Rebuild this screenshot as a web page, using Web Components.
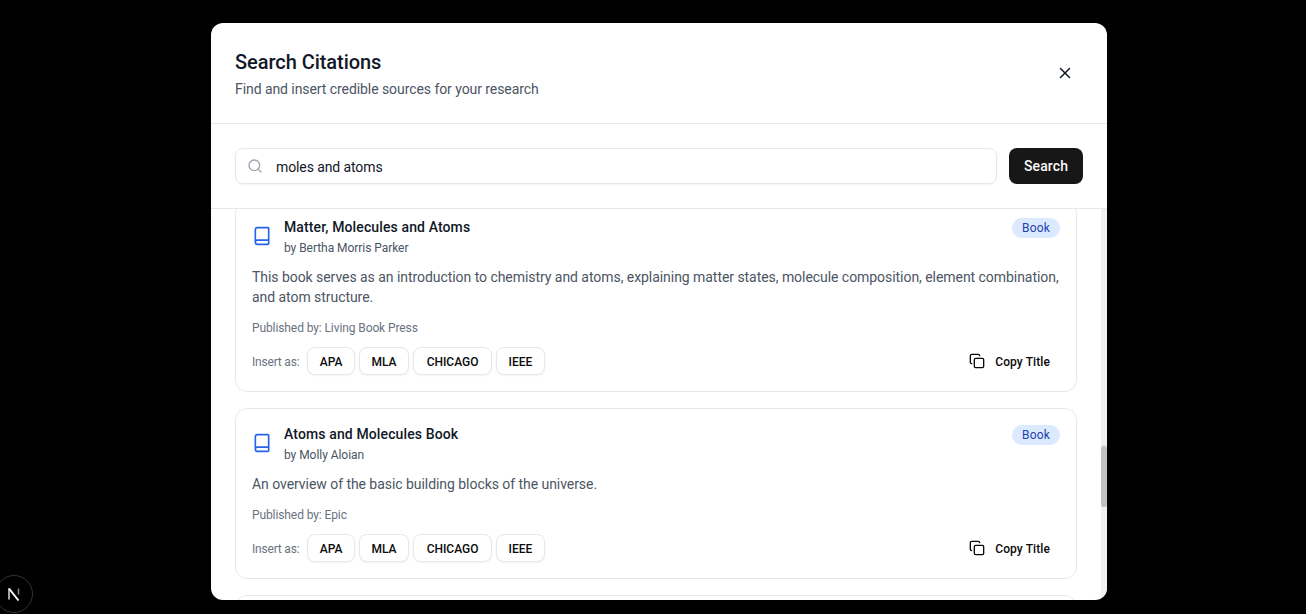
<!DOCTYPE html>
<html lang="en">
<head>
<meta charset="utf-8">
<title>Search Citations</title>
<style>
html, body { height: 100%; }
body {
	margin: 0;
	background: #000;
	overflow: hidden;
	font-family: Roboto, "Noto Sans", sans-serif;
	color: #111827;
}
citation-dialog { margin: 23px 0 0 211px; }
</style>
</head>
<body>

<citation-dialog heading="Search Citations" subheading="Find and insert credible sources for your research" query="moles and atoms">
	<citation-card title-text="Matter, Molecules and Atoms" author="Bertha Morris Parker" publisher="Living Book Press" kind="Book">
		This book serves as an introduction to chemistry and atoms, explaining matter states, molecule composition, element combination, and atom structure.
	</citation-card>
	<citation-card title-text="Atoms and Molecules Book" author="Molly Aloian" publisher="Epic" kind="Book">
		An overview of the basic building blocks of the universe.
	</citation-card>
	<citation-card></citation-card>
</citation-dialog>

<dev-badge></dev-badge>

<script>
const templateDialog = document.createElement('template');
templateDialog.innerHTML = `
<style>
:host {
	display: flex;
	flex-direction: column;
	width: 896px;
	height: 577px;
	background: #fff;
	border-radius: 12px;
	overflow: hidden;
	position: relative;
}
header {
	display: flex;
	justify-content: space-between;
	align-items: center;
	height: 100px;
	padding: 0 24px;
	border-bottom: 1px solid #e5e7eb;
	flex: none;
}
h2 {
	margin: 1px 0 3px;
	font-size: 20px;
	line-height: 28px;
	font-weight: 500;
	letter-spacing: -0.05px;
	color: #111827;
}
p {
	margin: 0;
	font-size: 14px;
	line-height: 20px;
	letter-spacing: -0.07px;
	color: #4b5563;
}
.close {
	display: flex;
	width: 36px;
	height: 36px;
	align-items: center;
	justify-content: center;
	border: 0;
	background: none;
	padding: 0;
	color: #111827;
}
.bar {
	display: flex;
	gap: 12px;
	padding: 24px;
	border-bottom: 1px solid #e5e7eb;
	flex: none;
}
.field {
	flex: 1;
	display: flex;
	align-items: center;
	gap: 13px;
	height: 36px;
	box-sizing: border-box;
	padding: 0 11px;
	border: 1px solid #e5e7eb;
	border-radius: 8px;
	box-shadow: 0 1px 2px rgba(0, 0, 0, .05);
	font-size: 14px;
	letter-spacing: -0.1px;
	color: #111827;
}
.field svg { color: #9ca3af; flex: none; }
.query { padding-top: 2px; }
.search {
	width: 74px;
	height: 36px;
	border: 0;
	border-radius: 8px;
	background: #171717;
	color: #fafafa;
	font: 500 14px Roboto, sans-serif;
	letter-spacing: 0.1px;
	padding: 0;
}
.list {
	flex: 1;
	overflow: hidden;
	padding: 0 30px 0 24px;
}
.inner {
	display: flex;
	flex-direction: column;
	gap: 16px;
	margin-top: -8px;
}
.track {
	position: absolute;
	right: 0;
	top: 186px;
	bottom: 0;
	width: 6px;
	background: #f1f1f1;
}
.thumb {
	position: absolute;
	left: 0;
	top: 237px;
	width: 6px;
	height: 61px;
	border-radius: 3px;
	background: #c1c1c1;
}
</style>
<header>
	<div>
		<h2></h2>
		<p></p>
	</div>
	<button class="close" aria-label="Close">
		<svg width="18" height="18" viewBox="0 0 24 24" fill="none" stroke="currentColor" stroke-width="2" stroke-linecap="round" stroke-linejoin="round"><path d="M18 6 6 18"/><path d="m6 6 12 12"/></svg>
	</button>
</header>
<div class="bar">
	<div class="field">
		<svg width="16" height="16" viewBox="0 0 24 24" fill="none" stroke="currentColor" stroke-width="2" stroke-linecap="round" stroke-linejoin="round"><circle cx="11" cy="11" r="8"/><path d="m21 21-4.3-4.3"/></svg>
		<span class="query"></span>
	</div>
	<button class="search">Search</button>
</div>
<div class="list"><div class="inner"><slot></slot></div></div>
<div class="track"><div class="thumb"></div></div>
`;

class CitationDialog extends HTMLElement {
	constructor() {
		super();
		this.attachShadow({mode: 'open'});
		this.shadowRoot.appendChild(templateDialog.content.cloneNode(true));
	}

	connectedCallback() {
		this.shadowRoot.querySelector('h2').textContent = this.getAttribute('heading');
		this.shadowRoot.querySelector('p').textContent = this.getAttribute('subheading');
		this.shadowRoot.querySelector('.query').textContent = this.getAttribute('query');
	}
}

const templateCard = document.createElement('template');
templateCard.innerHTML = `
<style>
:host {
	display: block;
	box-sizing: border-box;
	padding: 16px;
	border: 1px solid #e5e7eb;
	border-radius: 12px;
	background: #fff;
}
.top {
	display: flex;
	justify-content: space-between;
	align-items: flex-start;
}
.who {
	display: flex;
	align-items: center;
	gap: 12px;
}
.who svg { margin-bottom: 4px; color: #2563eb; flex: none; }
h3 {
	margin: -1px 0 1px;
	font-size: 14px;
	line-height: 20px;
	font-weight: 500;
	letter-spacing: 0.12px;
	color: #111827;
}
.author {
	font-size: 12px;
	line-height: 20px;
	letter-spacing: -0.05px;
	color: #4b5563;
}
.kind {
	padding: 0 10px;
	height: 20px;
	line-height: 20px;
	border-radius: 10px;
	background: #dbeafe;
	color: #1e40af;
	font-size: 12px;
	font-weight: 400;
	letter-spacing: 0.2px;
}
.text {
	margin: 9px 0 13px;
	font-size: 14px;
	line-height: 20px;
	letter-spacing: -0.05px;
	color: #4b5563;
}
.pub {
	font-size: 12px;
	line-height: 16px;
	letter-spacing: -0.1px;
	color: #6b7280;
	margin-bottom: 11px;
}
.actions {
	display: flex;
	align-items: center;
	gap: 4px;
}
.label {
	font-size: 12px;
	letter-spacing: -0.2px;
	color: #6b7280;
	margin-right: 4px;
	padding-top: 2px;
}
.fmt {
	height: 28px;
	padding: 2px 11.5px 0;
	border: 1px solid #e5e7eb;
	border-radius: 8px;
	background: #fff;
	box-shadow: 0 1px 2px rgba(0, 0, 0, .05);
	font: 500 12px Roboto, sans-serif;
	color: #0a0a0a;
}
.fmt.wide { min-width: 79px; }
.copy {
	margin-left: auto;
	display: flex;
	align-items: center;
	gap: 10px;
	border: 0;
	background: none;
	padding: 0 10px 0 0;
	font: 500 12px Roboto, sans-serif;
	letter-spacing: 0.1px;
	color: #0a0a0a;
}
.copy span { padding-top: 2px; }
</style>
<div class="top">
	<div class="who">
		<svg width="20" height="20" viewBox="0 0 24 24" fill="none" stroke="currentColor" stroke-width="2" stroke-linecap="round" stroke-linejoin="round"><path d="M4 19.5v-15A2.5 2.5 0 0 1 6.5 2H19a1 1 0 0 1 1 1v18a1 1 0 0 1-1 1H6.5a2.5 2.5 0 0 1-2.5-2.5Zm0 0A2.5 2.5 0 0 1 6.5 17H20"/></svg>
		<div>
			<h3></h3>
			<div class="author"></div>
		</div>
	</div>
	<span class="kind"></span>
</div>
<div class="text"><slot></slot></div>
<div class="pub"></div>
<div class="actions">
	<span class="label">Insert as:</span>
	<button class="fmt">APA</button>
	<button class="fmt">MLA</button>
	<button class="fmt wide">CHICAGO</button>
	<button class="fmt">IEEE</button>
	<button class="copy">
		<svg width="16" height="16" viewBox="0 0 24 24" fill="none" stroke="currentColor" stroke-width="2" stroke-linecap="round" stroke-linejoin="round"><rect x="8" y="8" width="14" height="14" rx="2" ry="2"/><path d="M4 16c-1.1 0-2-.9-2-2V4c0-1.1.9-2 2-2h10c1.1 0 2 .9 2 2"/></svg>
		<span>Copy Title</span>
	</button>
</div>
`;

class CitationCard extends HTMLElement {
	constructor() {
		super();
		this.attachShadow({mode: 'open'});
		this.shadowRoot.appendChild(templateCard.content.cloneNode(true));
	}

	connectedCallback() {
		const titulo = this.getAttribute('title-text');
		if (!titulo) {
			// card still below the fold, only its top edge shows
			this.shadowRoot.innerHTML = '<style>:host{display:block;height:120px;border:1px solid #e5e7eb;border-radius:12px;background:#fff}</style>';
			return;
		}
		this.shadowRoot.querySelector('h3').textContent = titulo;
		this.shadowRoot.querySelector('.author').textContent = 'by ' + this.getAttribute('author');
		this.shadowRoot.querySelector('.pub').textContent = 'Published by: ' + this.getAttribute('publisher');
		this.shadowRoot.querySelector('.kind').textContent = this.getAttribute('kind');
	}
}

const templateBadge = document.createElement('template');
templateBadge.innerHTML = `
<style>
:host {
	position: fixed;
	left: -5px;
	top: 575px;
	width: 38px;
	height: 38px;
	box-sizing: border-box;
	border: 1px solid #333;
	border-radius: 50%;
	background: #000;
	display: flex;
	align-items: center;
	justify-content: center;
}
</style>
<svg width="18" height="18" viewBox="0 0 18 18" fill="none">
	<path d="M4 3.5v11" stroke="#ddd" stroke-width="1.5"/>
	<path d="M4 3.5 13.5 15.5" stroke="#fff" stroke-width="2"/>
	<path d="M13.5 3.5v6" stroke="#888" stroke-width="1.5"/>
</svg>
`;

class DevBadge extends HTMLElement {
	constructor() {
		super();
		this.attachShadow({mode: 'open'});
		this.shadowRoot.appendChild(templateBadge.content.cloneNode(true));
	}
}

window.customElements.define('citation-dialog', CitationDialog);
window.customElements.define('citation-card', CitationCard);
window.customElements.define('dev-badge', DevBadge);
</script>
</body>
</html>
